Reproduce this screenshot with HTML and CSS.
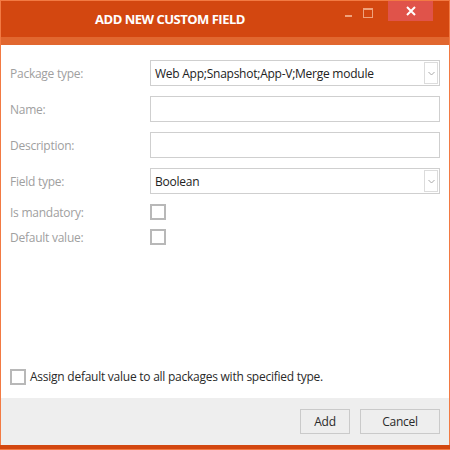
FILE: index.html
```html
<!DOCTYPE html>
<html>
<head>
<meta charset="utf-8">
<link rel="stylesheet" href="styles.css">
</head>
<body>
<div class="window">
  <div class="titlebar">
    <div class="title">ADD NEW CUSTOM FIELD</div>
    <div class="controls">
      <span class="ctl-min"></span>
      <span class="ctl-max"></span>
      <span class="ctl-close">
        <svg width="12" height="12" viewBox="0 0 12 12"><path d="M2 2 L10 10 M10 2 L2 10" stroke="#ffffff" stroke-width="2" fill="none"/></svg>
      </span>
    </div>
  </div>
  <div class="strip"></div>
  <div class="content">
    <div class="form">
      <div class="row">
        <div class="label">Package type:</div>
        <div class="field select"><span class="value">Web App;Snapshot;App-V;Merge module</span><span class="arrow"><svg width="7" height="5" viewBox="0 0 7 5"><path d="M0.5 1 L3.5 4 L6.5 1" stroke="#a8a8a8" stroke-width="1" fill="none"/></svg></span></div>
      </div>
      <div class="row">
        <div class="label">Name:</div>
        <div class="field"></div>
      </div>
      <div class="row">
        <div class="label">Description:</div>
        <div class="field"></div>
      </div>
      <div class="row">
        <div class="label">Field type:</div>
        <div class="field select"><span class="value">Boolean</span><span class="arrow"><svg width="7" height="5" viewBox="0 0 7 5"><path d="M0.5 1 L3.5 4 L6.5 1" stroke="#a8a8a8" stroke-width="1" fill="none"/></svg></span></div>
      </div>
      <div class="row check-row">
        <div class="label">Is mandatory:</div>
        <div class="checkbox"></div>
      </div>
      <div class="row check-row">
        <div class="label">Default value:</div>
        <div class="checkbox"></div>
      </div>
    </div>
    <div class="assign">
      <div class="checkbox"></div>
      <span class="assign-text">Assign default value to all packages with specified type.</span>
    </div>
  </div>
  <div class="footer">
    <button class="btn btn-add">Add</button>
    <button class="btn btn-cancel">Cancel</button>
  </div>
  <div class="bottombar"></div>
</div>
</body>
</html>
```
FILE: styles.css
```css
html, body {
  margin: 0;
  padding: 0;
  background: #ffffff;
}
body {
  font-family: "Open Sans", "Noto Sans", "Liberation Sans", sans-serif;
  font-size: 12px;
  letter-spacing: -0.25px;
}
.window {
  width: 450px;
  height: 450px;
  box-sizing: border-box;
  border: 1px solid #f27a43;
  border-bottom: none;
  display: flex;
  flex-direction: column;
  background: #ffffff;
}
.titlebar {
  height: 36px;
  background: #d34710;
  display: flex;
  position: relative;
}
.title {
  width: 338px;
  text-align: center;
  color: #ffffff;
  font-weight: bold;
  font-size: 13px;
  line-height: 36px;
  letter-spacing: -0.5px;
}
.controls {
  flex: 1;
  display: flex;
  align-items: flex-start;
}
.ctl-min {
  width: 7px;
  height: 2px;
  background: #efa27c;
  margin: 14px 0 0 6px;
}
.ctl-max {
  width: 8px;
  height: 7px;
  border: 1px solid #efa27c;
  border-top-width: 2px;
  margin: 7px 0 0 11px;
}
.ctl-close {
  width: 45px;
  height: 20px;
  background: #e0534a;
  margin-left: 15px;
  display: flex;
  align-items: center;
  justify-content: center;
}
.strip {
  height: 8px;
  background: #e1672f;
}
.content {
  flex: 1;
  display: flex;
  flex-direction: column;
  justify-content: space-between;
  padding: 15px 9px 13px 9px;
}
.form {
  display: flex;
  flex-direction: column;
}
.row {
  display: flex;
  align-items: center;
  height: 26px;
  margin-bottom: 10px;
}
.row.check-row {
  height: 16px;
  margin-bottom: 9px;
}
.label {
  width: 140px;
  color: #a0a0a0;
}
.field {
  flex: 1;
  height: 26px;
  box-sizing: border-box;
  border: 1px solid #cfcfcf;
  display: flex;
  align-items: center;
  padding-left: 4px;
  color: #222222;
}
.field .value {
  flex: 1;
}
.arrow {
  width: 14px;
  height: 22px;
  box-sizing: border-box;
  border: 1px solid #dcdcdc;
  margin-right: 1px;
  display: flex;
  align-items: center;
  justify-content: center;
}
.checkbox {
  width: 16px;
  height: 16px;
  box-sizing: border-box;
  border: 2px solid #b8b8b8;
  background: #ffffff;
}
.assign {
  display: flex;
  align-items: center;
  gap: 4px;
  color: #2a2a2a;
}
.footer {
  height: 47px;
  background: #eeeeee;
  display: flex;
  justify-content: flex-end;
  align-items: center;
  gap: 10px;
  padding-right: 9px;
}
.btn {
  height: 25px;
  box-sizing: border-box;
  border: 1px solid #cacaca;
  background: #eeeeee;
  font-family: inherit;
  font-size: 12px;
  letter-spacing: -0.25px;
  color: #2a2a2a;
  padding: 0;
}
.btn-add { width: 50px; }
.btn-cancel { width: 80px; }
.bottombar {
  height: 4px;
  background: #d34710;
  border-bottom: 1px solid #f27a43;
  margin: 0 -1px;
}
```
